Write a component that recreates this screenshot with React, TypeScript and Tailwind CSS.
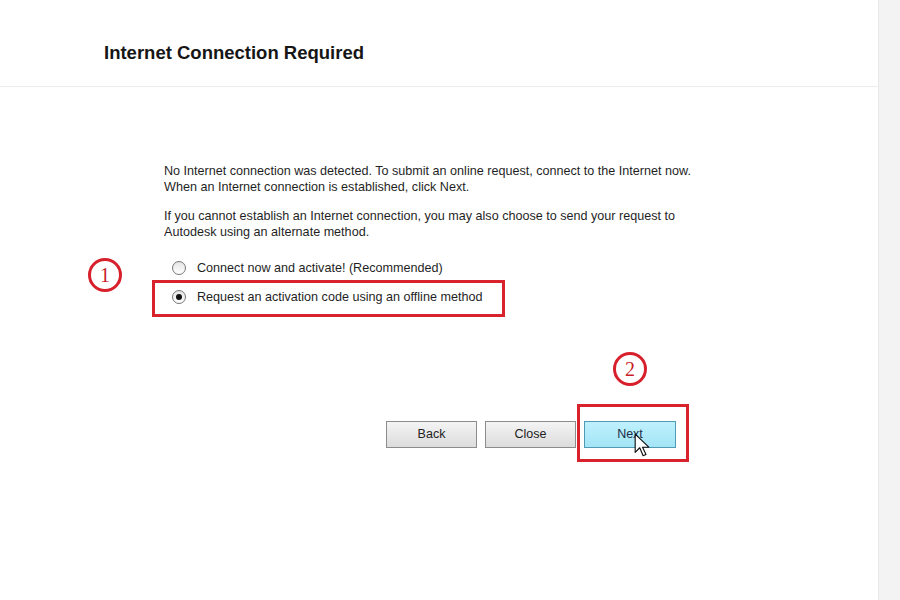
import { useState } from 'react';

type Choice = 'online' | 'offline';

function Radio({ checked, label, onSelect }: { checked: boolean; label: string; onSelect: () => void }) {
  return (
    <label onClick={onSelect} className="flex items-center h-[24px] ml-[8px] gap-[11px] cursor-default">
      <span className="w-[14px] h-[14px] rounded-full border border-[#767676] bg-gradient-to-b from-[#e4e4e4] to-white flex items-center justify-center">
        {checked && <span className="w-[6px] h-[6px] rounded-full bg-[#111]" />}
      </span>
      <span className="text-[12.6px] text-[#1f1f1f]">{label}</span>
    </label>
  );
}

function Badge({ n, className }: { n: string; className: string }) {
  return (
    <div
      className={`absolute w-[34px] h-[34px] rounded-full border-[3px] border-[#d7202b] flex items-center justify-center text-[#c81e28] text-[20px] leading-none ${className}`}
      style={{ fontFamily: '"Liberation Serif", serif' }}
    >
      {n}
    </div>
  );
}

export default function App() {
  const [choice, setChoice] = useState<Choice>('offline');

  return (
    <div className="w-full h-[600px] flex bg-white" style={{ fontFamily: '"Liberation Sans", Arial, sans-serif' }}>
      <div className="relative flex-1 bg-white">
        <div className="h-[87px] border-b border-[#ececec] pl-[104px] pt-[41px]">
          <h1 className="text-[18.5px] leading-[24px] font-bold text-[#161616]">Internet Connection Required</h1>
        </div>

        <div className="pl-[164px] pt-[76px] text-[12.6px] leading-[16px] text-[#1f1f1f]">
          <p>
            No Internet connection was detected. To submit an online request, connect to the Internet now.
            <br />
            When an Internet connection is established, click Next.
          </p>
          <p className="mt-[13px]">
            If you cannot establish an Internet connection, you may also choose to send your request to
            <br />
            Autodesk using an alternate method.
          </p>

          <div className="mt-[16px] flex flex-col gap-[5px]">
            <Radio
              checked={choice === 'online'}
              label="Connect now and activate! (Recommended)"
              onSelect={() => setChoice('online')}
            />
            <Radio
              checked={choice === 'offline'}
              label="Request an activation code using an offline method"
              onSelect={() => setChoice('offline')}
            />
          </div>
        </div>

        <div className="mt-[112px] pl-[386px] flex gap-[8px] text-[12.5px]">
          <button className="w-[91px] h-[27px] border border-[#8c8c8c] bg-gradient-to-b from-[#f4f4f4] to-[#dcdcdc] text-[#222]">
            Back
          </button>
          <button className="w-[91px] h-[27px] border border-[#8c8c8c] bg-gradient-to-b from-[#f4f4f4] to-[#dcdcdc] text-[#222]">
            Close
          </button>
          <button className="w-[92px] h-[27px] border border-[#4f9bb5] bg-gradient-to-b from-[#bff1fd] to-[#a3e4f6] text-[#1c2e48]">
            Next
          </button>
        </div>

        {/* tutorial annotations */}
        <Badge n="1" className="left-[88px] top-[258px]" />
        <div className="absolute left-[152px] top-[280px] w-[353px] h-[37px] border-[3px] border-[#d8222c]" />
        <Badge n="2" className="left-[613px] top-[352px]" />
        <div className="absolute left-[577px] top-[404px] w-[112px] h-[58px] border-[3px] border-[#d8222c]" />

        <svg className="absolute left-[634px] top-[433px]" width="16" height="25" viewBox="0 0 14 22">
          <path d="M1 1 L1 17 L5 13 L8 20 L10.5 19 L7.5 12.5 L13 12.5 Z" fill="#fff" stroke="#111" strokeWidth="1" strokeLinejoin="round" />
        </svg>
      </div>
      <div className="w-[22px] bg-[#f3f3f3] border-l border-[#e8e8e8]" />
    </div>
  );
}
